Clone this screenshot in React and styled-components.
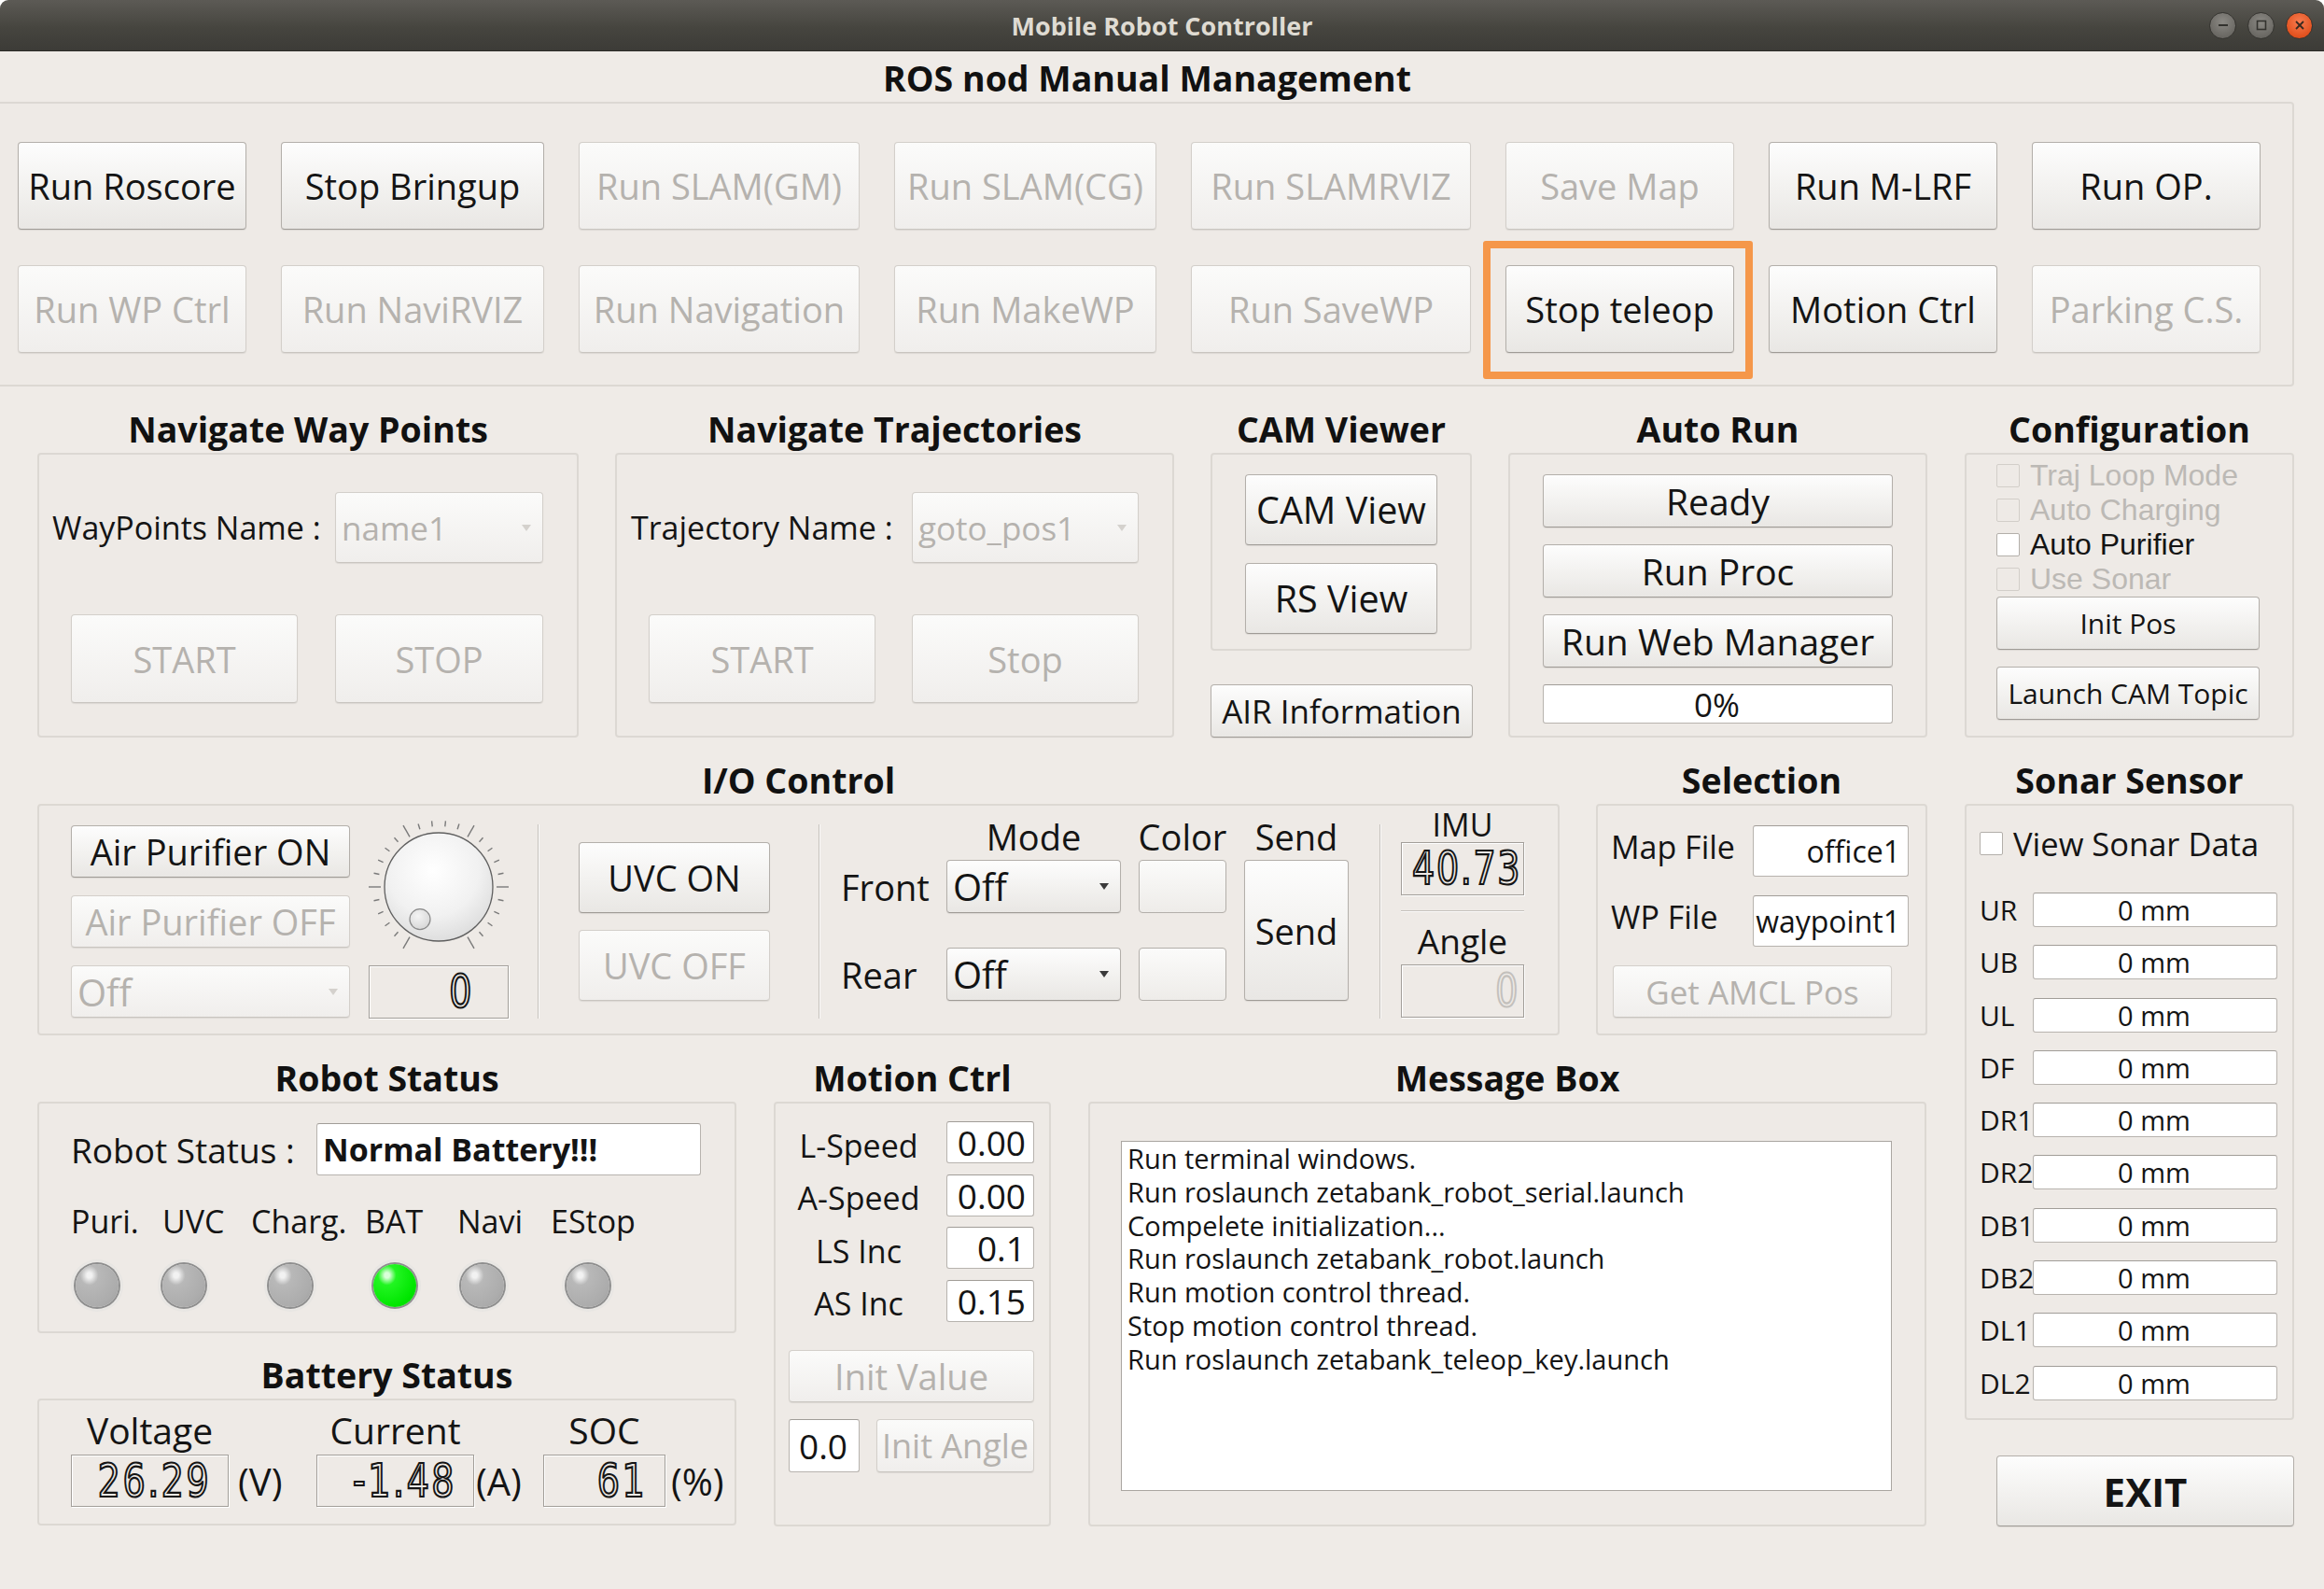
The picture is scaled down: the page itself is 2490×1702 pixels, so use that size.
import React from 'react';
import styled, { createGlobalStyle } from 'styled-components';

const SANS = `"Open Sans", "Noto Sans", "DejaVu Sans", sans-serif`;
const COMPACT = `"Liberation Sans", Arial, sans-serif`;
const LCDFONT = `"Liberation Sans Narrow", "DejaVu Sans Condensed", "Liberation Sans", sans-serif`;

const GlobalStyle = createGlobalStyle`
  html, body { margin: 0; padding: 0; background: #ffffff; }
  body { font-family: ${SANS}; color: #141414; }
  *, *::before, *::after { box-sizing: border-box; }
  button { font-family: inherit; }
`;

const Window = styled.div`
  width: 2490px;
  height: 1702px;
  display: flex;
  flex-direction: column;
  background: #efebe7;
  border-radius: 9px 9px 0 0;
  overflow: hidden;
`;

const TitleBar = styled.header`
  flex: none;
  height: 55px;
  display: grid;
  grid-template-columns: 1fr auto 1fr;
  align-items: center;
  background: linear-gradient(#5c5a55, #46453f 55%, #3c3b37);
  border-bottom: 1px solid #2c2b28;
`;

const TitleText = styled.div`
  grid-column: 2;
  font-size: 27px;
  font-weight: 700;
  color: #dfdbd2;
`;

const WinControls = styled.div`
  grid-column: 3;
  justify-self: end;
  display: flex;
  gap: 12px;
  padding-right: 12px;
`;

const WinBtn = styled.div`
  width: 29px;
  height: 29px;
  border-radius: 50%;
  display: flex;
  align-items: center;
  justify-content: center;
  border: 1px solid #34332f;
  background: ${(p) =>
    p.$close
      ? 'radial-gradient(circle at 50% 35%, #f97c50, #e2521f 70%, #c84418)'
      : 'radial-gradient(circle at 50% 35%, #8b8984, #6b6964 70%, #5a5853)'};
`;

const Body = styled.main`
  flex: 1;
  padding: 4px 32px 0 0;
  display: flex;
  flex-direction: column;
`;

const SectionTitle = styled.div`
  height: 50px;
  line-height: 50px;
  text-align: center;
  font-size: 37.5px;
  font-weight: 700;
  color: #111;
  white-space: nowrap;
`;

const Section = styled.section`
  display: flex;
  flex-direction: column;
  width: ${(p) => p.$w}px;
  flex: none;
`;

const GroupBox = styled.div`
  border: 2px solid #dcd8d3;
  border-radius: 4px;
  background: #eeeae6;
  height: ${(p) => p.$h}px;
`;

const TopBox = styled(GroupBox)`
  border-left: none;
  border-radius: 0 4px 4px 0;
  padding: 41px 0 0 19px;
  display: grid;
  grid-template-columns: 245px 282px 301px 281px 300px 245px 245px 245px;
  grid-auto-rows: 94px;
  column-gap: 37px;
  row-gap: 38px;
`;

const Cell = styled.div`
  position: relative;
  display: flex;
`;

const Highlight = styled.div`
  position: absolute;
  left: -24px;
  right: -20px;
  top: -26px;
  bottom: -28px;
  border: 8px solid #f5974a;
  border-radius: 3px;
  pointer-events: none;
`;

const Btn = styled.button`
  font-family: ${SANS};
  font-size: ${(p) => p.$fs || 38}px;
  font-weight: ${(p) => (p.$bold ? 700 : 400)};
  color: ${(p) => (p.disabled ? '#b5b2ae' : '#141414')};
  background: ${(p) =>
    p.disabled
      ? 'linear-gradient(#fbfbfa, #f0eeec)'
      : 'linear-gradient(#fdfdfd, #f3f2f0 50%, #e9e7e4)'};
  border: 1px solid ${(p) => (p.disabled ? '#d3cfca' : '#b3afaa')};
  border-bottom-color: ${(p) => (p.disabled ? '#c9c5c0' : '#9f9b96')};
  border-radius: 4px;
  box-shadow: 0 1px 1px rgba(0, 0, 0, 0.08);
  width: ${(p) => (p.$w ? `${p.$w}px` : '100%')};
  height: ${(p) => (p.$h ? `${p.$h}px` : '100%')};
  margin-left: ${(p) => p.$ml || 0}px;
  padding: 0;
  display: flex;
  align-items: center;
  justify-content: center;
  white-space: nowrap;
  overflow: hidden;
  flex: none;
`;

const ComboBox = styled.div`
  width: ${(p) => p.$w}px;
  height: ${(p) => p.$h}px;
  display: flex;
  align-items: center;
  justify-content: space-between;
  padding: 0 12px 0 6px;
  font-size: ${(p) => p.$fs || 40}px;
  color: ${(p) => (p.$disabled ? '#b5b2ae' : '#141414')};
  background: ${(p) =>
    p.$disabled
      ? 'linear-gradient(#fbfbfa, #f0eeec)'
      : 'linear-gradient(#fdfdfd, #f3f2f0 50%, #e9e7e4)'};
  border: 1px solid ${(p) => (p.$disabled ? '#d3cfca' : '#b3afaa')};
  border-bottom-color: ${(p) => (p.$disabled ? '#c9c5c0' : '#9f9b96')};
  border-radius: 4px;
  box-shadow: 0 1px 1px rgba(0, 0, 0, 0.08);
  white-space: nowrap;
  grid-row: ${(p) => p.$row || 'auto'};
  grid-column: ${(p) => p.$col || 'auto'};
`;

const Arrow = styled.span`
  width: 0;
  height: 0;
  border-left: 5px solid transparent;
  border-right: 5px solid transparent;
  border-top: 7px solid ${(p) => (p.$disabled ? '#d4d1cd' : '#3a3a3a')};
`;

const Field = styled.div`
  width: ${(p) => (p.$w ? `${p.$w}px` : '100%')};
  height: ${(p) => p.$h}px;
  background: #ffffff;
  border: 1px solid #b7b3ae;
  border-top-color: #a19d98;
  border-radius: 3px;
  display: flex;
  align-items: center;
  justify-content: ${(p) => p.$align || 'flex-start'};
  padding: 0 8px 0 6px;
  font-size: ${(p) => p.$fs || 34}px;
  font-weight: ${(p) => (p.$bold ? 700 : 400)};
  color: #141414;
  white-space: nowrap;
  position: relative;
`;

const Label = styled.div`
  font-size: ${(p) => p.$fs || 34}px;
  color: ${(p) => (p.$disabled ? '#b5b2ae' : '#141414')};
  white-space: nowrap;
  display: flex;
  align-items: center;
  justify-content: ${(p) => p.$justify || 'flex-start'};
  grid-row: ${(p) => p.$row || 'auto'};
  grid-column: ${(p) => p.$col || 'auto'};
`;

const Lcd = styled.div`
  width: ${(p) => p.$w}px;
  height: ${(p) => p.$h}px;
  border: 1px solid #a29e99;
  box-shadow: 1px 1px 0 #ffffff, inset 1px 1px 0 #ffffff;
  display: flex;
  align-items: center;
  justify-content: flex-end;
  padding-right: ${(p) => p.$pr}px;
  margin-top: ${(p) => p.$mt || 0}px;
  grid-row: ${(p) => p.$row || 'auto'};
  grid-column: ${(p) => p.$col || 'auto'};
  flex: none;
`;

const LcdText = styled.span`
  display: inline-block;
  font-family: ${LCDFONT};
  font-stretch: condensed;
  font-size: 49px;
  letter-spacing: ${(p) => p.$ls || 3}px;
  line-height: 1;
  color: transparent;
  -webkit-text-stroke: 2.2px ${(p) => (p.$disabled ? '#c3c0bc' : '#151515')};
  transform: scaleX(0.86);
  transform-origin: right center;
  white-space: pre;
`;

/* ---------- layout ---------- */

const Main = styled.div`
  margin: 21px 0 0 40px;
  display: grid;
  grid-template-columns: 2025px 353px;
  column-gap: 40px;
  row-gap: 21px;
  align-items: start;
`;

const Row = styled.div`
  display: flex;
  gap: ${(p) => p.$gap || 39}px;
  align-items: flex-start;
`;

const RightStack = styled.div`
  grid-row: span 2;
  display: flex;
  flex-direction: column;
`;

const NavBox = styled(GroupBox)`
  padding: 40px 0 0 ${(p) => p.$pl}px;
  display: grid;
  grid-template-columns: ${(p) => p.$labelCol}px ${(p) => p.$comboW}px;
  grid-template-rows: 76px 95px;
  row-gap: 55px;
`;

const ColumnBox = styled(GroupBox)`
  padding-top: 21px;
  display: flex;
  flex-direction: column;
  align-items: center;
  gap: ${(p) => p.$gap}px;
`;

const ConfigBox = styled(GroupBox)`
  padding: 4px 0 0 32px;
  display: flex;
  flex-direction: column;
`;

const CheckRow = styled.div`
  height: ${(p) => p.$h || 37}px;
  display: flex;
  align-items: center;
  gap: 11px;
  font-family: ${(p) => (p.$compact ? COMPACT : SANS)};
  font-size: ${(p) => p.$fs || 32}px;
  color: ${(p) => (p.$disabled ? '#bcb9b5' : '#141414')};
  white-space: nowrap;
`;

const CheckBox = styled.span`
  width: 25px;
  height: 25px;
  flex: none;
  border: 1px solid ${(p) => (p.$disabled ? '#d2cec9' : '#b3afaa')};
  background: ${(p) => (p.$disabled ? 'transparent' : '#ffffff')};
  border-radius: 2px;
`;

const StackGap = styled.div`
  display: flex;
  flex-direction: column;
  gap: 18px;
  margin-top: ${(p) => p.$mt || 0}px;
`;

const IOBox = styled(GroupBox)`
  padding: 21px 0 0 34px;
  display: flex;
  align-items: flex-start;
`;

const PurifierGrid = styled.div`
  display: grid;
  grid-template-columns: 299px 150px;
  grid-template-rows: 56px 56px 56px;
  column-gap: 20px;
  row-gap: 19px;
`;

const DialCell = styled.div`
  grid-column: 2;
  grid-row: 1 / span 2;
  display: flex;
  align-items: center;
  justify-content: center;
`;

const DialSvg = styled.svg`
  margin: -10px 0;
`;

const VSep = styled.div`
  width: 2px;
  height: 208px;
  margin-left: ${(p) => p.$ml}px;
  margin-top: -1px;
  border-left: 1px solid #c6c2bd;
  border-right: 1px solid #fbfaf9;
  flex: none;
`;

const UvcCol = styled.div`
  margin: 18px 0 0 42px;
  width: 205px;
  display: flex;
  flex-direction: column;
  gap: 18px;
`;

const ModeGrid = styled.div`
  margin: -13px 0 0 22px;
  display: grid;
  grid-template-columns: 94px 187px 94px 112px;
  grid-template-rows: 50px 57px 37px 57px;
  column-gap: 19px;
`;

const HeadLabel = styled(Label)`
  grid-row: 1;
  justify-content: center;
  font-size: 38px;
`;

const ColorSwatch = styled.div`
  grid-column: 3;
  grid-row: ${(p) => p.$row};
  border: 1px solid #b3afaa;
  border-radius: 4px;
  background: linear-gradient(#fbfbfa, #eeece9);
`;

const SendCell = styled.div`
  grid-column: 4;
  grid-row: 2 / span 3;
  display: flex;
`;

const ImuCol = styled.div`
  margin: -20px 0 0 21px;
  width: 132px;
  display: flex;
  flex-direction: column;
  align-items: center;
`;

const ImuLabel = styled(Label)`
  height: ${(p) => p.$h}px;
  margin-top: ${(p) => p.$mt || 0}px;
  font-size: ${(p) => p.$fs}px;
`;

const HLine = styled.div`
  width: 132px;
  height: 2px;
  margin-top: 16px;
  border-top: 1px solid #c6c2bd;
  border-bottom: 1px solid #fbfaf9;
`;

const SelectBox = styled(GroupBox)`
  padding: 21px 0 0 14px;
  display: grid;
  grid-template-columns: 152px 167px;
  grid-template-rows: 55px 55px 56px;
  row-gap: 20px;
`;

const SelLabel = styled(Label)`
  align-self: start;
  height: 45px;
`;

const AmclCell = styled.div`
  grid-column: 1 / span 2;
  padding-left: 2px;
  display: flex;
`;

const SonarBox = styled(GroupBox)`
  padding: 18px 0 0 14px;
  display: flex;
  flex-direction: column;
`;

const SonarGrid = styled.div`
  margin-top: 31px;
  display: grid;
  grid-template-columns: 57px 262px;
  grid-auto-rows: 37px;
  row-gap: 19.3px;
`;

const ExitWrap = styled.div`
  margin-top: 38px;
  display: flex;
  justify-content: flex-end;
`;

const ColumnStack = styled.div`
  display: flex;
  flex-direction: column;
  gap: ${(p) => p.$gap || 0}px;
  width: ${(p) => p.$w}px;
`;

const RobotBox = styled(GroupBox)`
  padding: 21px 0 0 34px;
`;

const StatusRow = styled.div`
  display: flex;
  align-items: center;
  height: 56px;
`;

const StatusLabel = styled(Label)`
  width: 263px;
  font-size: 37px;
`;

const LedGrid = styled.div`
  margin-top: 22px;
  display: grid;
  grid-template-columns: 98px 95px 122px 99px 100px 100px;
  grid-template-rows: 54px 56px;
  row-gap: 14px;
`;

const Led = styled.div`
  grid-row: 2;
  width: 56px;
  height: 56px;
  margin-left: ${(p) => p.$ml}px;
  border-radius: 50%;
  background: radial-gradient(circle, #ebe9e6 62%, #d9d7d4 100%);
  display: flex;
  align-items: center;
  justify-content: center;
  &::after {
    content: '';
    width: 46px;
    height: 46px;
    border-radius: 50%;
    box-shadow: 0 0 0 2px #8f8f8f;
    background: ${(p) =>
      p.$on
        ? 'radial-gradient(ellipse at 32% 26%, #d9ffd9 0 6%, #22f522 22%, #00e600 70%, #00c800 100%)'
        : 'radial-gradient(ellipse at 32% 26%, #f2f2f2 0 6%, #b8b8b8 22%, #acacac 70%, #9c9c9c 100%)'};
  }
`;

const BatteryBox = styled(GroupBox)`
  padding: 11px 0 0 34px;
  display: grid;
  grid-template-columns: 169px 94px 169px 74px 131px auto;
  grid-template-rows: 40px 56px;
  row-gap: 7px;
`;

const BatLabel = styled(Label)`
  grid-row: 1;
  justify-content: center;
  font-size: 39px;
`;

const UnitLabel = styled(Label)`
  grid-row: 2;
  padding-left: ${(p) => p.$pl}px;
  font-size: 40px;
`;

const MotionBox = styled(GroupBox)`
  padding: 19px 0 0 14px;
  display: flex;
  flex-direction: column;
`;

const MotionGrid = styled.div`
  display: grid;
  grid-template-columns: 150px 94px;
  grid-auto-rows: 45px;
  column-gap: 19px;
  row-gap: 11.5px;
`;

const MotionLabel = styled(Label)`
  justify-content: center;
  padding-top: 6px;
`;

const InitRow = styled.div`
  margin-top: 18px;
  display: flex;
  gap: 18px;
`;

const MessageBox = styled(GroupBox)`
  padding: 40px 0 0 33px;
`;

const MessageArea = styled.div`
  width: 826px;
  height: 375px;
  background: #ffffff;
  border: 1px solid #aaa6a1;
  padding: 0 6px;
  font-size: 29px;
  line-height: 35.8px;
  color: #141414;
  white-space: pre;
  overflow: hidden;
`;

/* ---------- drawings ---------- */

function Dial() {
  const ticks = [];
  for (let i = 0; i <= 25; i++) {
    const a = ((240 - i * 12) * Math.PI) / 180;
    const long = i % 5 === 0;
    const r1 = long ? 62 : 65;
    const r2 = long ? 76 : 71;
    ticks.push(
      <line
        key={i}
        x1={75 + r1 * Math.cos(a)}
        y1={75 - r1 * Math.sin(a)}
        x2={75 + r2 * Math.cos(a)}
        y2={75 - r2 * Math.sin(a)}
        stroke="#7a7a7a"
        strokeWidth="1.4"
      />
    );
  }
  return (
    <DialSvg width="150" height="150" viewBox="0 0 150 150">
      <defs>
        <radialGradient id="knob" cx="45%" cy="35%" r="70%">
          <stop offset="0%" stopColor="#ffffff" />
          <stop offset="60%" stopColor="#f1f1f1" />
          <stop offset="100%" stopColor="#dadada" />
        </radialGradient>
        <radialGradient id="dot" cx="40%" cy="35%" r="70%">
          <stop offset="0%" stopColor="#f4f4f4" />
          <stop offset="100%" stopColor="#d6d6d6" />
        </radialGradient>
      </defs>
      {ticks}
      <circle cx="75" cy="75" r="58" fill="url(#knob)" stroke="#5f5f5f" strokeWidth="1.3" />
      <circle cx="55" cy="109.6" r="11" fill="url(#dot)" stroke="#8a8a8a" strokeWidth="1.2" />
    </DialSvg>
  );
}

function WinIcon({ kind }) {
  return (
    <svg width="16" height="16" viewBox="0 0 16 16">
      {kind === 'min' && <line x1="3" y1="8" x2="13" y2="8" stroke="#33322e" strokeWidth="2" />}
      {kind === 'max' && <rect x="3.5" y="3.5" width="9" height="9" fill="none" stroke="#33322e" strokeWidth="1.6" />}
      {kind === 'close' && (
        <g stroke="#3a2a20" strokeWidth="1.8">
          <line x1="4" y1="4" x2="12" y2="12" />
          <line x1="12" y1="4" x2="4" y2="12" />
        </g>
      )}
    </svg>
  );
}

/* ---------- data ---------- */

const topButtons = [
  { t: 'Run Roscore' },
  { t: 'Stop Bringup' },
  { t: 'Run SLAM(GM)', d: true },
  { t: 'Run SLAM(CG)', d: true },
  { t: 'Run SLAMRVIZ', d: true },
  { t: 'Save Map', d: true },
  { t: 'Run M-LRF' },
  { t: 'Run OP.' },
  { t: 'Run WP Ctrl', d: true },
  { t: 'Run NaviRVIZ', d: true },
  { t: 'Run Navigation', d: true },
  { t: 'Run MakeWP', d: true },
  { t: 'Run SaveWP', d: true },
  { t: 'Stop teleop', hl: true },
  { t: 'Motion Ctrl' },
  { t: 'Parking C.S.', d: true },
];

const configChecks = [
  { t: 'Traj Loop Mode', d: true },
  { t: 'Auto Charging', d: true },
  { t: 'Auto Purifier' },
  { t: 'Use Sonar', d: true },
];

const sonar = ['UR', 'UB', 'UL', 'DF', 'DR1', 'DR2', 'DB1', 'DB2', 'DL1', 'DL2'];

const leds = [
  { t: 'Puri.', ml: 0 },
  { t: 'UVC', ml: -5 },
  { t: 'Charg.', ml: 14 },
  { t: 'BAT', ml: 4, on: true },
  { t: 'Navi', ml: -1 },
  { t: 'EStop', ml: 12 },
];

const motion = [
  ['L-Speed', '0.00'],
  ['A-Speed', '0.00'],
  ['LS Inc', '0.1'],
  ['AS Inc', '0.15'],
];

const messages = [
  'Run terminal windows.',
  'Run roslaunch zetabank_robot_serial.launch',
  'Compelete initialization...',
  'Run roslaunch zetabank_robot.launch',
  'Run motion control thread.',
  'Stop motion control thread.',
  'Run roslaunch zetabank_teleop_key.launch',
];

export default function App() {
  return (
    <>
      <GlobalStyle />
      <Window>
        <TitleBar>
          <TitleText>Mobile Robot Controller</TitleText>
          <WinControls>
            <WinBtn><WinIcon kind="min" /></WinBtn>
            <WinBtn><WinIcon kind="max" /></WinBtn>
            <WinBtn $close><WinIcon kind="close" /></WinBtn>
          </WinControls>
        </TitleBar>

        <Body>
          <Section $w={2458}>
            <SectionTitle>ROS nod Manual Management</SectionTitle>
            <TopBox $h={305}>
              {topButtons.map((b) => (
                <Cell key={b.t}>
                  <Btn disabled={b.d}>{b.t}</Btn>
                  {b.hl && <Highlight />}
                </Cell>
              ))}
            </TopBox>
          </Section>

          <Main>
            <Row>
              <Section $w={580}>
                <SectionTitle>Navigate Way Points</SectionTitle>
                <NavBox $h={305} $pl={14} $labelCol={303} $comboW={223}>
                  <Label>WayPoints Name :</Label>
                  <ComboBox $w={223} $h={76} $disabled $fs={35}>
                    name1<Arrow $disabled />
                  </ComboBox>
                  <Btn disabled $w={243} $ml={20}>START</Btn>
                  <Btn disabled $w={223}>STOP</Btn>
                </NavBox>
              </Section>

              <Section $w={599}>
                <SectionTitle>Navigate Trajectories</SectionTitle>
                <NavBox $h={305} $pl={15} $labelCol={301} $comboW={243}>
                  <Label>Trajectory Name :</Label>
                  <ComboBox $w={243} $h={76} $disabled $fs={35}>
                    goto_pos1<Arrow $disabled />
                  </ComboBox>
                  <Btn disabled $w={243} $ml={19}>START</Btn>
                  <Btn disabled $w={243}>Stop</Btn>
                </NavBox>
              </Section>

              <Section $w={280}>
                <SectionTitle>CAM Viewer</SectionTitle>
                <ColumnBox $h={212} $gap={19}>
                  <Btn $w={206} $h={76} $fs={39.5}>CAM View</Btn>
                  <Btn $w={206} $h={76} $fs={39.5}>RS View</Btn>
                </ColumnBox>
                <StackGap $mt={36}>
                  <Btn $w={281} $h={57} $fs={35}>AIR Information</Btn>
                </StackGap>
              </Section>

              <Section $w={449}>
                <SectionTitle>Auto Run</SectionTitle>
                <ColumnBox $h={305} $gap={18}>
                  <Btn $w={375} $h={57} $fs={39}>Ready</Btn>
                  <Btn $w={375} $h={57} $fs={39}>Run Proc</Btn>
                  <Btn $w={375} $h={57} $fs={39}>Run Web Manager</Btn>
                  <Field $w={375} $h={42} $align="center" $fs={35}>0%</Field>
                </ColumnBox>
              </Section>
            </Row>

            <Section $w={353}>
              <SectionTitle>Configuration</SectionTitle>
              <ConfigBox $h={305}>
                {configChecks.map((c) => (
                  <CheckRow key={c.t} $compact $disabled={c.d}>
                    <CheckBox $disabled={c.d} />
                    {c.t}
                  </CheckRow>
                ))}
                <StackGap>
                  <Btn $w={282} $h={57} $fs={30}>Init Pos</Btn>
                  <Btn $w={282} $h={57} $fs={30}>Launch CAM Topic</Btn>
                </StackGap>
              </ConfigBox>
            </Section>

            <Row>
              <Section $w={1631}>
                <SectionTitle>I/O Control</SectionTitle>
                <IOBox $h={248}>
                  <PurifierGrid>
                    <Btn>Air Purifier ON</Btn>
                    <DialCell><Dial /></DialCell>
                    <Btn disabled>Air Purifier OFF</Btn>
                    <ComboBox $w={299} $h={56} $disabled>
                      Off<Arrow $disabled />
                    </ComboBox>
                    <Lcd $w={150} $h={57} $pr={36}>
                      <LcdText>0</LcdText>
                    </Lcd>
                  </PurifierGrid>

                  <VSep $ml={31} />

                  <UvcCol>
                    <Btn $h={76}>UVC ON</Btn>
                    <Btn disabled $h={76}>UVC OFF</Btn>
                  </UvcCol>

                  <VSep $ml={52} />

                  <ModeGrid>
                    <HeadLabel $col={2}>Mode</HeadLabel>
                    <HeadLabel $col={3}>Color</HeadLabel>
                    <HeadLabel $col={4}>Send</HeadLabel>
                    <Label $row={2} $col={1} $fs={38}>Front</Label>
                    <ComboBox $w={187} $h={57} $row={2} $col={2}>
                      Off<Arrow />
                    </ComboBox>
                    <ColorSwatch $row={2} />
                    <Label $row={4} $col={1} $fs={38}>Rear</Label>
                    <ComboBox $w={187} $h={57} $row={4} $col={2}>
                      Off<Arrow />
                    </ComboBox>
                    <ColorSwatch $row={4} />
                    <SendCell>
                      <Btn>Send</Btn>
                    </SendCell>
                  </ModeGrid>

                  <VSep $ml={33} />

                  <ImuCol>
                    <ImuLabel $h={38} $fs={34}>IMU</ImuLabel>
                    <Lcd $w={132} $h={57} $pr={2}>
                      <LcdText $ls={2}>40.73</LcdText>
                    </Lcd>
                    <HLine />
                    <ImuLabel $h={44} $mt={8} $fs={37}>Angle</ImuLabel>
                    <Lcd $w={132} $h={57} $pr={4} $mt={4}>
                      <LcdText $ls={2} $disabled>0</LcdText>
                    </Lcd>
                  </ImuCol>
                </IOBox>
              </Section>

              <Section $w={355}>
                <SectionTitle>Selection</SectionTitle>
                <SelectBox $h={248}>
                  <SelLabel>Map File</SelLabel>
                  <Field $h={55} $align="flex-end" $fs={32}>office1</Field>
                  <SelLabel>WP File</SelLabel>
                  <Field $h={55} $align="flex-end" $fs={32}>waypoint1</Field>
                  <AmclCell>
                    <Btn disabled $w={299} $fs={35}>Get AMCL Pos</Btn>
                  </AmclCell>
                </SelectBox>
              </Section>
            </Row>

            <RightStack>
              <SectionTitle>Sonar Sensor</SectionTitle>
              <SonarBox $h={660}>
                <CheckRow $h={44} $fs={34.5}><CheckBox />View Sonar Data</CheckRow>
                <SonarGrid>
                  {sonar.map((s) => (
                    <React.Fragment key={s}>
                      <Label $fs={30}>{s}</Label>
                      <Field $h={37} $align="center" $fs={29}>0 mm</Field>
                    </React.Fragment>
                  ))}
                </SonarGrid>
              </SonarBox>
              <ExitWrap>
                <Btn $w={319} $h={76} $bold $fs={42}>EXIT</Btn>
              </ExitWrap>
            </RightStack>

            <Row $gap={40}>
              <ColumnStack $w={749} $gap={20}>
                <Section $w={749}>
                  <SectionTitle>Robot Status</SectionTitle>
                  <RobotBox $h={248}>
                    <StatusRow>
                      <StatusLabel>Robot Status :</StatusLabel>
                      <Field $w={412} $h={56} $bold $fs={34}>Normal Battery!!!</Field>
                    </StatusRow>
                    <LedGrid>
                      {leds.map((l) => (
                        <Label key={l.t}>{l.t}</Label>
                      ))}
                      {leds.map((l) => (
                        <Led key={l.t} $ml={l.ml} $on={l.on} />
                      ))}
                    </LedGrid>
                  </RobotBox>
                </Section>
                <Section $w={749}>
                  <SectionTitle>Battery Status</SectionTitle>
                  <BatteryBox $h={136}>
                    <BatLabel $col={1}>Voltage</BatLabel>
                    <BatLabel $col={3}>Current</BatLabel>
                    <BatLabel $col={5}>SOC</BatLabel>
                    <Lcd $w={169} $h={56} $pr={18} $row={2} $col={1}>
                      <LcdText>26.29</LcdText>
                    </Lcd>
                    <UnitLabel $pl={10} $col={2}>(V)</UnitLabel>
                    <Lcd $w={169} $h={56} $pr={18} $row={2} $col={3}>
                      <LcdText>-1.48</LcdText>
                    </Lcd>
                    <UnitLabel $pl={2} $col={4}>(A)</UnitLabel>
                    <Lcd $w={131} $h={56} $pr={19} $row={2} $col={5}>
                      <LcdText>61</LcdText>
                    </Lcd>
                    <UnitLabel $pl={6} $col={6}>(%)</UnitLabel>
                  </BatteryBox>
                </Section>
              </ColumnStack>

              <Section $w={297}>
                <SectionTitle>Motion Ctrl</SectionTitle>
                <MotionBox $h={455}>
                  <MotionGrid>
                    {motion.map(([l, v]) => (
                      <React.Fragment key={l}>
                        <MotionLabel>{l}</MotionLabel>
                        <Field $h={45} $align="flex-end" $fs={37}>{v}</Field>
                      </React.Fragment>
                    ))}
                  </MotionGrid>
                  <StackGap $mt={30}>
                    <Btn disabled $w={263} $h={56} $fs={38}>Init Value</Btn>
                  </StackGap>
                  <InitRow>
                    <Field $w={76} $h={57} $align="center" $fs={37}>0.0</Field>
                    <Btn disabled $w={169} $h={57} $fs={36}>Init Angle</Btn>
                  </InitRow>
                </MotionBox>
              </Section>

              <Section $w={898}>
                <SectionTitle>Message Box</SectionTitle>
                <MessageBox $h={455}>
                  <MessageArea>{messages.join('\n')}</MessageArea>
                </MessageBox>
              </Section>
            </Row>
          </Main>
        </Body>
      </Window>
    </>
  );
}
